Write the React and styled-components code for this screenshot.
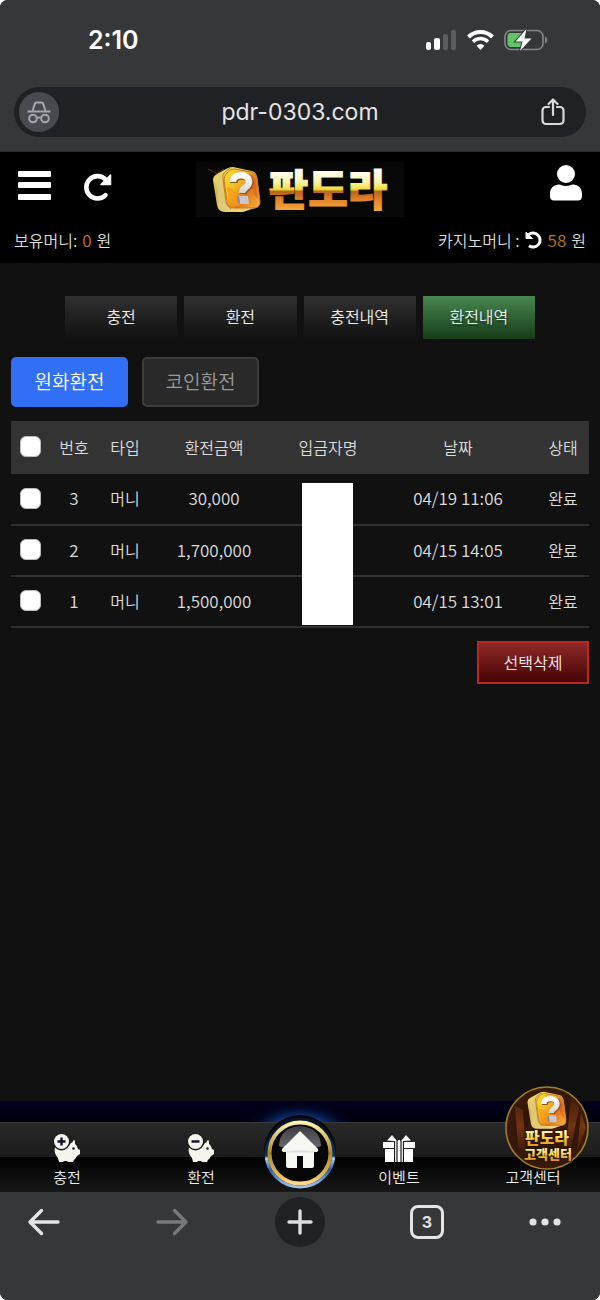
import React from "react";
import styled, { createGlobalStyle, css } from "styled-components";

const KR = '"Noto Sans CJK KR", "Noto Sans", sans-serif';
const UI = 'Inter, "Liberation Sans", sans-serif';

const GlobalStyle = createGlobalStyle`
  * { box-sizing: border-box; }
  html, body { margin: 0; background: #fff; }
  body { font-family: ${KR}; font-weight: 350; }
  button { margin: 0; padding: 0; border: 0; background: none; color: inherit; font: inherit; cursor: pointer; }
  a { color: inherit; text-decoration: none; }
  svg { display: block; overflow: visible; }
`;

const Screen = styled.div`
  display: flex;
  flex-direction: column;
  min-height: 100vh;
  overflow: hidden;
  border-radius: 8px;
  background: #111;
  color: #ddd;
  font-size: 16px;
  line-height: 24px;
`;

/* Browser chrome */

const BrowserTop = styled.div`
  background: #363739;
  padding: 20px 14px 14px;
  border-bottom: 1px solid #2a2a2c;
`;

const StatusBar = styled.div`
  display: flex;
  align-items: center;
  justify-content: space-between;
  height: 40px;
  margin-bottom: 27px;
  padding: 0 38px 0 74px;
`;

const Clock = styled.time`
  font: 600 25px/40px ${UI};
  color: #fff;
`;

const StatusIcons = styled.div`
  display: flex;
  align-items: center;
  gap: 10px;
`;

const AddressBar = styled.div`
  display: grid;
  grid-template-columns: 40px 1fr 40px;
  align-items: center;
  height: 50px;
  padding: 0 13px 0 5px;
  border-radius: 25px;
  background: #202124;
`;

const Incognito = styled.span`
  display: grid;
  place-items: center;
  width: 40px;
  height: 40px;
  border-radius: 50%;
  background: #474b4f;
`;

const Url = styled.span`
  padding-left: 8px;
  text-align: center;
  font: 400 23px/32px ${UI};
  color: #e4e4e6;
`;

const ShareButton = styled.button`
  display: grid;
  place-items: center;
  height: 40px;
`;

/* Site header */

const Header = styled.header`
  background: #000;
  padding: 10px 14px 10px;
`;

const HeaderRow = styled.div`
  display: grid;
  grid-template-columns: 1fr auto 1fr;
  align-items: start;
  margin-bottom: 10px;
`;

const HeaderTools = styled.div`
  display: flex;
  gap: 32px;
  padding: 3px 4px 0;
  justify-content: ${(p) => (p.$end ? "flex-end" : "flex-start")};
`;

const Logo = styled.a`
  display: block;
  width: 208px;
  height: 55px;
  background: #080808;
`;

const Balances = styled.div`
  display: flex;
  justify-content: space-between;
`;

const Balance = styled.div`
  display: flex;
  align-items: center;
  gap: 5px;
  height: 26px;
`;

const Amount = styled.span`
  color: #c47a1b;
  font-size: 17px;
`;

/* Content */

const Main = styled.main`
  flex: 1;
  padding: 33px 11px;
`;

const Tabs = styled.nav`
  display: grid;
  grid-template-columns: repeat(4, 1fr);
  gap: 7px;
  margin: 0 54px 18px;
`;

const Tab = styled.a`
  display: grid;
  place-items: center;
  height: 43px;
  padding-bottom: 4px;
  color: #eee;
  background: linear-gradient(#303030, #111);
  ${(p) =>
    p.$active &&
    css`
      background: linear-gradient(#488750, #153c1a);
      text-shadow: 1px 2px 2px #0006;
    `}
`;

const MethodRow = styled.div`
  display: flex;
  gap: 14px;
  margin-bottom: 14px;
`;

const MethodButton = styled.button`
  width: 117px;
  height: 50px;
  padding-bottom: 2px;
  border-radius: 5px;
  font-size: 19px;
  border: 2px solid ${(p) => (p.$active ? "#316ff6" : "#3d3d3d")};
  background: ${(p) => (p.$active ? "#316ff6" : "#292929")};
  color: ${(p) => (p.$active ? "#fff" : "#999")};
`;

const Table = styled.table`
  width: 100%;
  table-layout: fixed;
  border-collapse: collapse;
  text-align: center;
`;

const HeadCell = styled.th`
  height: 53px;
  padding: 0 0 2px;
  background: #333;
  font-weight: 350;
`;

const Cell = styled.td`
  position: relative;
  height: 51px;
  padding: 0 0 2px;
  border-bottom: 2px solid #303030;
  font-size: ${(p) => (p.$number ? "17px" : "16px")};
`;

const Check = styled.input`
  appearance: none;
  display: block;
  width: 21px;
  height: 21px;
  margin: 0 auto;
  border: 1px solid #bbb;
  border-radius: 6px;
  background: #fff;
  &:checked { background: #316ff6; }
`;

const NameCover = styled.span`
  position: absolute;
  z-index: 1;
  top: 9px;
  left: 25px;
  right: 26px;
  height: 142px;
  background: #fff;
`;

const Actions = styled.div`
  display: flex;
  justify-content: flex-end;
  margin-top: 13px;
`;

const DeleteButton = styled.button`
  width: 112px;
  height: 43px;
  padding-bottom: 2px;
  border: 2px solid #bd271f;
  background: linear-gradient(#8c2929, #470404);
  color: #eee;
`;

/* Site bottom navigation */

const BottomNav = styled.nav`
  position: relative;
  padding-top: 21px;
  background: linear-gradient(#00001c, #00000f 21px, #000 22px);
`;

const NavBar = styled.div`
  display: grid;
  grid-template-columns: 1fr 1fr 64px 1fr 1fr;
  height: 70px;
  border-top: 1px solid #373737;
  background: linear-gradient(#292929, #1b1b1b 50%, #000 50%, #181818);
`;

const NavItem = styled.a`
  display: flex;
  flex-direction: column;
  align-items: center;
  justify-content: flex-end;
  gap: 2px;
  padding-bottom: 4px;
  font-size: 15px;
  line-height: 22px;
  color: #eee;
`;

const HomeLink = styled.a`
  position: relative;
  svg {
    position: absolute;
    left: 50%;
    bottom: -1px;
    transform: translateX(-50%);
  }
`;

const SupportBadge = styled.a`
  position: absolute;
  right: 11px;
  top: -15px;
`;

/* Browser toolbar */

const Toolbar = styled.div`
  display: grid;
  grid-template-columns: 88fr 168fr 88fr 166fr 70fr;
  align-items: start;
  justify-items: center;
  height: 108px;
  padding: 5px 20px 0 0;
  background: #363739;
`;

const ToolButton = styled.button`
  display: grid;
  place-items: center;
  width: 50px;
  height: 50px;
  border-radius: 50%;
  background: ${(p) => (p.$filled ? "#202124" : "none")};
`;

const TabCount = styled.span`
  width: 34px;
  height: 34px;
  border: 3px solid #e4e4e6;
  border-radius: 8px;
  text-align: center;
  font: 700 16px/28px ${UI};
  color: #e4e4e6;
`;

/* Drawings */

const SignalIcon = () => (
  <svg width="31" height="20" viewBox="0 0 31 20">
    <rect x="0" y="12" width="5" height="8" rx="2" fill="#fff" />
    <rect x="8" y="8" width="6" height="12" rx="2" fill="#fff" />
    <rect x="17" y="4" width="5" height="16" rx="2" fill="#5c5d5f" />
    <rect x="25" y="0" width="5" height="20" rx="2" fill="#5c5d5f" />
  </svg>
);

const WifiIcon = () => (
  <svg width="27" height="20" viewBox="0 0 27 20" fill="none" stroke="#fff">
    <path d="M1.500 7a17 17 0 0 1 24 0" strokeWidth="4" />
    <path d="M6 11.700a10.500 10.500 0 0 1 15 0" strokeWidth="3.400" />
    <path d="M13.500 20l-4-4.300a5.600 5.600 0 0 1 8 0z" fill="#fff" stroke="none" />
  </svg>
);

const BatteryIcon = () => (
  <svg width="44" height="22" viewBox="0 0 44 22">
    <rect x="1" y="1.500" width="38" height="19" rx="6" fill="none" stroke="#858688" strokeWidth="1.600" />
    <path d="M41 7.500c3 .8 3 6.200 0 7z" fill="#858688" />
    <path d="M7 4h11v14H7a3.500 3.500 0 0 1-3.500-3.500v-7A3.500 3.500 0 0 1 7 4z" fill="#61c466" />
    <path d="M22.500 0L11.500 12.500h7L16 22l11.500-12.500h-7z" fill="#fff" stroke="#363739" strokeWidth="2" paintOrder="stroke" />
  </svg>
);

const IncognitoIcon = () => (
  <svg width="24" height="23" viewBox="0 0 24 23" fill="none" stroke="#a4a8ac" strokeWidth="2">
    <path d="M.5 10.500h23" />
    <path d="M5.500 10L8 2.200c.5-1 1.300-.8 4-.8s3.500-.2 4 .8L18.500 10" />
    <circle cx="6" cy="17.500" r="3.800" />
    <circle cx="18" cy="17.500" r="3.800" />
    <path d="M9.800 17c1.500-.8 2.900-.8 4.400 0" />
  </svg>
);

const ShareIcon = () => (
  <svg width="24" height="28" viewBox="0 0 24 28" fill="none" stroke="#d8d8da" strokeWidth="2.200" strokeLinecap="round" strokeLinejoin="round">
    <path d="M8 9H5a3.500 3.500 0 0 0-3.500 3.500v10A3.500 3.500 0 0 0 5 26h14a3.500 3.500 0 0 0 3.500-3.500v-10A3.500 3.500 0 0 0 19 9h-3" />
    <path d="M12 17V2M7.500 6L12 1.500 16.500 6" />
  </svg>
);

const MenuIcon = () => (
  <svg width="33" height="40" viewBox="0 0 33 40" fill="#fff">
    <rect x="0" y="6" width="33" height="6" rx="1" />
    <rect x="0" y="17" width="33" height="6" rx="1" />
    <rect x="0" y="29" width="33" height="6" rx="1" />
  </svg>
);

const RefreshIcon = () => (
  <svg width="30" height="40" viewBox="0 0 30 40">
    <path d="M22.500 30.200A11.200 11.200 0 1 1 22 14" fill="none" stroke="#fff" strokeWidth="4.600" strokeLinecap="round" />
    <path d="M27.500 10v9.500H18z" fill="#fff" stroke="#fff" strokeWidth="1.500" strokeLinejoin="round" />
  </svg>
);

const UndoIcon = () => (
  <svg width="18" height="18" viewBox="0 0 18 18">
    <path d="M3.600 3.700A7 7 0 1 1 4 14.800" fill="none" stroke="#fff" strokeWidth="3" />
    <path d="M1 1v6.500h6.500z" fill="#fff" stroke="#fff" strokeLinejoin="round" />
  </svg>
);

const UserIcon = () => (
  <svg width="32" height="36" viewBox="0 0 32 36" fill="#fff">
    <circle cx="16" cy="9" r="9" />
    <path d="M0 31v-2c0-6 4-9.500 9-9.500 2 0 3.500 1.500 7 1.500s5-1.500 7-1.500c5 0 9 3.500 9 9.500v2c0 3-1.500 4.500-4 4.500H4c-2.500 0-4-1.500-4-4.500z" />
  </svg>
);

const CubeArt = ({ id }) => (
  <>
    <defs>
      <linearGradient id={`${id}side`} x1="0" y1="0" x2=".6" y2="1">
        <stop offset="0" stopColor="#f7e878" />
        <stop offset=".45" stopColor="#d3b557" />
        <stop offset="1" stopColor="#f2d583" />
      </linearGradient>
      <linearGradient id={`${id}face`} x1="0" y1="0" x2="1" y2=".8">
        <stop offset="0" stopColor="#f9dd38" />
        <stop offset=".4" stopColor="#f3bd25" />
        <stop offset=".7" stopColor="#e1771c" />
        <stop offset="1" stopColor="#f6a636" />
      </linearGradient>
      <linearGradient id={`${id}mark`} x1="0" y1="0" x2="0" y2="1">
        <stop offset="0" stopColor="#fff" />
        <stop offset="1" stopColor="#d5d2cd" />
      </linearGradient>
    </defs>
    <path d="M3 14q0-4 4-6l9-5q3-2 7-2l19 4q4 1 5 6l3 25q0 5-5 6l-12 4H15q-7 0-8-7z" fill={`url(#${id}side)`} />
    <path d="M6 12q8-3 9 4l2 19q1 6 5 8l-7 1q-5-1-6-6z" fill="#e3cc7c" opacity=".8" />
    <path d="M20 2l-6 5q-2 2-1 6l3 23q1 4 5 7" fill="none" stroke="#b98526" strokeWidth="1" />
    <path d="M17 7q2-4 7-4l17 3q5 1 6 6l3 24q0 5-5 6H24q-6 0-7-6l-3-22q0-4 3-7z" fill={`url(#${id}face)`} stroke="#c57a1c" strokeWidth="1" />
    <path d="M22 5l18 3q4 1 5 5l3 20q-5-3-6-14-2-10-20-14z" fill="#dc5a1c" opacity=".65" />
    <path d="M17 21q8 1 12 10l1 9h-6q-4-1-5-5z" fill="#f59a1a" opacity=".7" />
    <path d="M24 17c0-9 16-9 16 0 0 6-7 5-7 11" fill="none" stroke="#8a561f" strokeWidth="7" />
    <path d="M23 16c0-9 16-9 16 0 0 6-7 5-7 11" fill="none" stroke={`url(#${id}mark)`} strokeWidth="6.500" />
    <path d="M29 30h9l1 8h-9z" fill="#c9c7cb" />
    <path d="M29 30l-2 1 1 6 2 1z" fill="#8f8787" />
  </>
);

const LogoArt = () => (
  <svg width="208" height="55" viewBox="0 0 208 55">
    <defs>
      <linearGradient id="logoWord" gradientUnits="userSpaceOnUse" x1="0" y1="8" x2="0" y2="48">
        <stop offset="0" stopColor="#fff" />
        <stop offset=".3" stopColor="#faf4a8" />
        <stop offset=".48" stopColor="#f2de3e" />
        <stop offset=".54" stopColor="#b8641c" />
        <stop offset=".75" stopColor="#e4842a" />
        <stop offset="1" stopColor="#f4a63c" />
      </linearGradient>
    </defs>
    <g transform="translate(14 4)">
      <CubeArt id="l" />
    </g>
    <path d="M12 7l10 5M20 12l8-5" stroke="#a8451a" opacity=".7" />
    <text x="132" y="44" textAnchor="middle" fontFamily="Noto Sans CJK KR, sans-serif" fontWeight="900" fontSize="43" fill="url(#logoWord)" stroke="url(#logoWord)" strokeWidth="1">판도라</text>
  </svg>
);

const PiggyIcon = ({ minus }) => (
  <svg width="28" height="31" viewBox="0 0 28 31">
    <path d="M2 14h13l3-4c2 0 2-3 3-3 1 0 1 2 1 4 2 1 2 3 3 5l2 1v4l-3 2c-1 2-2 3-3 4l-1 2h-5l-1-1h-3l-1 1H6l-1-4c-3-3-4-7-3-11z" fill="#f5f5ee" />
    <circle cx="20.500" cy="15.500" r="1.300" fill="#222" />
    <circle cx="8.500" cy="9" r="8.500" fill="#1b1b1b" />
    <circle cx="8.500" cy="8.500" r="7.500" fill="#f5f5ee" />
    <path d={minus ? "M4.500 8.500h8" : "M4.500 8.500h8M8.500 4.500v8"} stroke="#11112a" strokeWidth="2.400" />
  </svg>
);

const GiftIcon = () => (
  <svg width="32" height="31" viewBox="0 0 32 31">
    <path d="M14 8L9 2 4 7.500l6 .5zM18 8l5-6 5 5.500L22 8z" fill="#f4f4f2" />
    <path d="M0 9h11v6H0zM21 9h11v6H21zM2 16h9v13H2zM21 16h9v13h-9z" fill="#fff" />
    <path d="M12 8h8v21h-8z" fill="#777" />
    <path d="M12.500 8v21M19.500 8v21" stroke="#ddd" />
    <path d="M15 7h2v22h-2z" fill="#fff" />
  </svg>
);

const HomeArt = () => (
  <svg width="128" height="80" viewBox="0 0 128 80">
    <defs>
      <radialGradient id="homeGlow" cx=".5" cy=".52" r=".5">
        <stop offset=".5" stopColor="#0c3b82" />
        <stop offset=".75" stopColor="#04123a" stopOpacity=".65" />
        <stop offset="1" stopColor="#00001c" stopOpacity="0" />
      </radialGradient>
      <linearGradient id="homeRing" x1="0" y1="0" x2="0" y2="1">
        <stop offset="0" stopColor="#fff5ae" />
        <stop offset=".5" stopColor="#ad872e" />
        <stop offset=".85" stopColor="#e1b94e" />
        <stop offset="1" stopColor="#ffd98a" />
      </linearGradient>
      <linearGradient id="homeBlue" x1="0" y1="0" x2="0" y2="1">
        <stop offset=".2" stopColor="#061428" />
        <stop offset=".54" stopColor="#0d3468" />
        <stop offset=".58" stopColor="#a5d3f5" />
        <stop offset=".75" stopColor="#2360b5" />
        <stop offset="1" stopColor="#9fc4ee" />
      </linearGradient>
      <linearGradient id="homeGloss" x1="0" y1="0" x2="0" y2="1">
        <stop offset="0" stopColor="#3a3a40" />
        <stop offset="1" stopColor="#6d6d74" />
      </linearGradient>
      <clipPath id="homeStrip">
        <path d="M0-12h128V9H0z" />
      </clipPath>
    </defs>
    <ellipse cx="64" cy="20" rx="60" ry="34" fill="url(#homeGlow)" clipPath="url(#homeStrip)" />
    <circle cx="64" cy="38" r="36" fill="#020408" />
    <circle cx="64" cy="40" r="34" fill="none" stroke="url(#homeBlue)" strokeWidth="3" />
    <circle cx="64" cy="40" r="30.500" fill="#050505" stroke="url(#homeRing)" strokeWidth="4" />
    <path d="M43 33q1-19 21-20 20 1 21 20-5 3-21 3t-21-3z" fill="url(#homeGloss)" />
    <path d="M64 18L46 36q-1 2 1 3h3v14q0 2 2 2h9V43h6v12h9q2 0 2-2V39h3q2-1 1-3z" fill="#f7f7f3" />
    <path d="M49 38.500q15-2 30 0l-1 1H50z" fill="#dededa" />
  </svg>
);

const SupportArt = () => (
  <svg width="84" height="84" viewBox="0 0 84 84">
    <defs>
      <radialGradient id="supportBg">
        <stop offset="0" stopColor="#4a2208" />
        <stop offset=".6" stopColor="#2f1407" />
        <stop offset="1" stopColor="#3a1a0a" />
      </radialGradient>
      <linearGradient id="supportText" x1="0" y1="0" x2="0" y2="1">
        <stop offset=".25" stopColor="#fff6b0" />
        <stop offset=".55" stopColor="#f5cf45" />
        <stop offset=".9" stopColor="#e58d23" />
      </linearGradient>
      <linearGradient id="curtain" x1="0" y1="0" x2="0" y2="1">
        <stop offset="0" stopColor="#a04a16" stopOpacity=".1" />
        <stop offset=".5" stopColor="#a04a16" stopOpacity=".6" />
        <stop offset="1" stopColor="#a04a16" stopOpacity="0" />
      </linearGradient>
    </defs>
    <circle cx="42" cy="42" r="41" fill="url(#supportBg)" stroke="#a27f2a" strokeWidth="1.600" />
    <path d="M10 20l8 4 3 46-8-10zM66 10l8 12-8 40-5-2zM76 26l5 16-9 24z" fill="url(#curtain)" />
    <g transform="translate(20 5) scale(.82)">
      <CubeArt id="s" />
    </g>
    <g fontFamily="Noto Sans CJK KR, sans-serif" fontWeight="900" textAnchor="middle" fill="url(#supportText)" stroke="#2a1205" strokeWidth="2" paintOrder="stroke">
      <text x="42" y="58" fontSize="16">판도라</text>
      <text x="43" y="73" fontSize="13">고객센터</text>
    </g>
  </svg>
);

const ArrowIcon = ({ forward }) => (
  <svg width="32" height="28" viewBox="0 0 32 28" fill="none" stroke={forward ? "#78797b" : "#e4e4e6"} strokeWidth="3.400" strokeLinecap="round" strokeLinejoin="round">
    <path d={forward ? "M2 14h28M18.500 2.500L30 14 18.500 25.500" : "M30 14H2M13.500 2.500L2 14l11.500 11.500"} />
  </svg>
);

const PlusIcon = () => (
  <svg width="26" height="26" viewBox="0 0 26 26" stroke="#dcdce0" strokeWidth="3.400" strokeLinecap="round">
    <path d="M13 2v22M2 13h22" />
  </svg>
);

const MoreIcon = () => (
  <svg width="32" height="8" viewBox="0 0 32 8" fill="#e4e4e6">
    <circle cx="4" cy="4" r="3.600" />
    <circle cx="16" cy="4" r="3.600" />
    <circle cx="28" cy="4" r="3.600" />
  </svg>
);

const tabs = ["충전", "환전", "충전내역", "환전내역"];
const columns = [
  ["번호", 50],
  ["타입", 52],
  ["환전금액", 126],
  ["입금자명", 102],
  ["날짜", 158],
  ["상태", 52],
];
const rows = [
  { no: 3, amount: "30,000", date: "04/19 11:06" },
  { no: 2, amount: "1,700,000", date: "04/15 14:05" },
  { no: 1, amount: "1,500,000", date: "04/15 13:01" },
];

export default function App() {
  return (
    <>
      <GlobalStyle />
      <Screen>
        <BrowserTop>
          <StatusBar>
            <Clock>2:10</Clock>
            <StatusIcons>
              <SignalIcon />
              <WifiIcon />
              <BatteryIcon />
            </StatusIcons>
          </StatusBar>
          <AddressBar>
            <Incognito><IncognitoIcon /></Incognito>
            <Url>pdr-0303.com</Url>
            <ShareButton aria-label="공유"><ShareIcon /></ShareButton>
          </AddressBar>
        </BrowserTop>

        <Header>
          <HeaderRow>
            <HeaderTools>
              <button aria-label="메뉴"><MenuIcon /></button>
              <button aria-label="새로고침"><RefreshIcon /></button>
            </HeaderTools>
            <Logo href="#"><LogoArt /></Logo>
            <HeaderTools $end>
              <button aria-label="내 정보"><UserIcon /></button>
            </HeaderTools>
          </HeaderRow>
          <Balances>
            <Balance>보유머니: <Amount>0</Amount> 원</Balance>
            <Balance>
              카지노머니 :
              <button aria-label="카지노머니 새로고침"><UndoIcon /></button>
              <Amount>58</Amount> 원
            </Balance>
          </Balances>
        </Header>

        <Main>
          <Tabs>
            {tabs.map((t, i) => (
              <Tab key={t} href="#" $active={i === 3}>{t}</Tab>
            ))}
          </Tabs>
          <MethodRow>
            <MethodButton $active>원화환전</MethodButton>
            <MethodButton>코인환전</MethodButton>
          </MethodRow>
          <Table>
            <colgroup>
              <col style={{ width: 38 }} />
              {columns.map(([name, width]) => <col key={name} style={{ width }} />)}
            </colgroup>
            <thead>
              <tr>
                <HeadCell><Check type="checkbox" aria-label="전체 선택" /></HeadCell>
                {columns.map(([name]) => <HeadCell key={name} scope="col">{name}</HeadCell>)}
              </tr>
            </thead>
            <tbody>
              {rows.map((r, i) => (
                <tr key={r.no}>
                  <Cell><Check type="checkbox" aria-label={`${r.no}번 선택`} /></Cell>
                  <Cell $number>{r.no}</Cell>
                  <Cell>머니</Cell>
                  <Cell $number>{r.amount}</Cell>
                  <Cell>{i === 0 && <NameCover />}</Cell>
                  <Cell $number>{r.date}</Cell>
                  <Cell>완료</Cell>
                </tr>
              ))}
            </tbody>
          </Table>
          <Actions>
            <DeleteButton>선택삭제</DeleteButton>
          </Actions>
        </Main>

        <BottomNav>
          <NavBar>
            <NavItem href="#"><PiggyIcon />충전</NavItem>
            <NavItem href="#"><PiggyIcon minus />환전</NavItem>
            <HomeLink href="#" aria-label="홈"><HomeArt /></HomeLink>
            <NavItem href="#"><GiftIcon />이벤트</NavItem>
            <NavItem href="#">고객센터</NavItem>
          </NavBar>
          <SupportBadge href="#"><SupportArt /></SupportBadge>
        </BottomNav>

        <Toolbar>
          <ToolButton aria-label="뒤로"><ArrowIcon /></ToolButton>
          <ToolButton aria-label="앞으로"><ArrowIcon forward /></ToolButton>
          <ToolButton $filled aria-label="새 탭"><PlusIcon /></ToolButton>
          <ToolButton><TabCount>3</TabCount></ToolButton>
          <ToolButton aria-label="더보기"><MoreIcon /></ToolButton>
        </Toolbar>
      </Screen>
    </>
  );
}
